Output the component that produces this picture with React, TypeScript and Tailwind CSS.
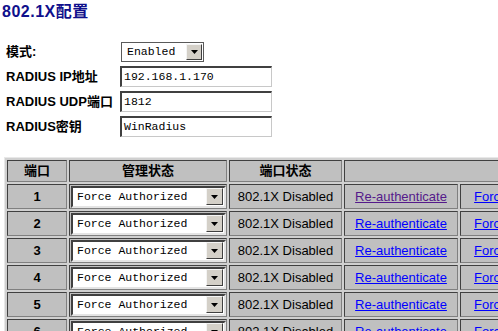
const ports = [1, 2, 3, 4, 5, 6];

const sans = "font-['Liberation_Sans','Noto_Sans_CJK_SC',sans-serif]";
const mono = "font-['Liberation_Mono','Noto_Sans_CJK_SC',monospace]";

const ArrowButton = ({ size }: { size: string }) => (
  <div
    className={`${size} flex items-center justify-center bg-[#d4d0c8] border border-t-[#f4f4f4] border-l-[#f4f4f4] border-r-[#404040] border-b-[#404040] shrink-0`}
  >
    <svg width="7" height="4" viewBox="0 0 7 4">
      <path d="M0 0h7L3.5 4z" fill="#000" />
    </svg>
  </div>
);

const TextBox = ({ value }: { value: string }) => (
  <div
    className={`${mono} w-[152px] h-[21px] flex items-center pl-[2px] text-[11.5px] font-normal text-black bg-white border-t-2 border-l-2 border-t-[#404040] border-l-[#404040] border-r border-b border-r-[#c8c8c8] border-b-[#c8c8c8]`}
  >
    {value}
  </div>
);

const CellSelect = () => (
  <div className="w-[155px] h-[22px] flex items-center justify-between bg-white border-t-2 border-l-2 border-t-[#404040] border-l-[#404040] border-r-2 border-b-2 border-r-[#e4e4e4] border-b-[#e4e4e4] pl-[4px] pr-[1px]">
    <span className={`${mono} text-[11.5px] text-black`}>Force Authorized</span>
    <ArrowButton size="w-[17px] h-[17px]" />
  </div>
);

const cell =
  "border border-t-[#404040] border-l-[#404040] border-r-[#808080] border-b-[#808080] bg-[#c0c0c0] p-0";

export default function App() {
  return (
    <div className={`${sans} w-[498px] h-[331px] overflow-hidden bg-white text-black`}>
      <h1 className="pl-[2px] pt-[3px] text-[16px] leading-[18px] font-bold text-[#10108c] tracking-[0.5px]">
        802.1X配置
      </h1>

      <div className="mt-[18px] grid grid-cols-[114px_auto] auto-rows-[25px] items-center pl-[6px] text-[13px] font-bold">
        <span>模式:</span>
        <div className="ml-[1px] w-[83px] h-[20px] flex items-center justify-between bg-white border border-[#5a5a5a] pl-[5px] pr-[1px]">
          <span className={`${mono} text-[11.5px] font-normal`}>Enabled</span>
          <ArrowButton size="w-[16px] h-[16px]" />
        </div>
        <span>RADIUS IP地址</span>
        <TextBox value="192.168.1.170" />
        <span>RADIUS UDP端口</span>
        <TextBox value="1812" />
        <span>RADIUS密钥</span>
        <TextBox value="WinRadius" />
      </div>

      <table className="mt-[18px] ml-[4px] w-[571px] min-w-[571px] table-fixed border-separate border-spacing-[2px] bg-[#d0d0d0] border border-[#e8e8e8] text-[13px]">
        <colgroup>
          <col className="w-[60px]" />
          <col className="w-[158px]" />
          <col className="w-[113px]" />
          <col className="w-[114px]" />
          <col className="w-[112px]" />
        </colgroup>
        <thead>
          <tr className="h-[22px]">
            <th className={`${cell} whitespace-nowrap`}>端口</th>
            <th className={`${cell} whitespace-nowrap`}>管理状态</th>
            <th className={`${cell} whitespace-nowrap`}>端口状态</th>
            <th className={cell} colSpan={2}></th>
          </tr>
        </thead>
        <tbody>
          {ports.map((p) => (
            <tr key={p} className="h-[25px]">
              <td className={`${cell} text-center font-bold`}>{p}</td>
              <td className={`${cell} pl-[1px]`}>
                <CellSelect />
              </td>
              <td className={`${cell} text-center whitespace-nowrap`}>802.1X Disabled</td>
              <td className={`${cell} text-center whitespace-nowrap`}>
                <a
                  href="#"
                  className={`underline ${p === 1 ? "text-[#551a8b]" : "text-[#0000ff]"}`}
                >
                  Re-authenticate
                </a>
              </td>
              <td className={`${cell} text-center whitespace-nowrap`}>
                <a href="#" className="underline text-[#0000ff]">
                  Force Initialize
                </a>
              </td>
            </tr>
          ))}
        </tbody>
      </table>
    </div>
  );
}
